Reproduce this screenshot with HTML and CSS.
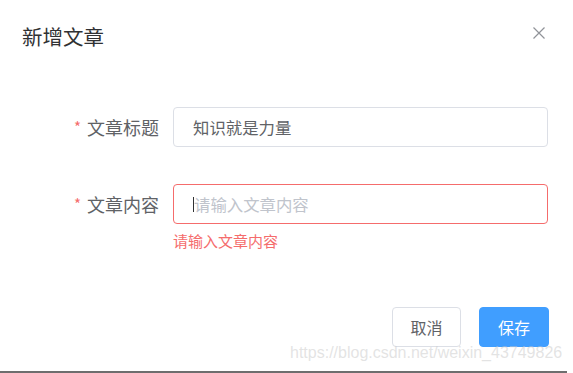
FILE: index.html
```html
<!DOCTYPE html>
<html lang="zh-CN">
<head>
<meta charset="utf-8">
<title>新增文章</title>
<link rel="stylesheet" href="styles.css">
</head>
<body>
<div class="dialog">
  <div class="dialog-header">
    <span class="dialog-title">新增文章</span>
    <button class="dialog-close" aria-label="Close">
      <svg width="12" height="12" viewBox="0 0 12 12"><path d="M0.5 0.5L11.5 11.5M11.5 0.5L0.5 11.5" stroke="#909399" stroke-width="1.2" fill="none"/></svg>
    </button>
  </div>
  <div class="dialog-body">
    <div class="form-item">
      <label class="form-label"><span class="req">*</span>文章标题</label>
      <div class="form-content">
        <div class="input">知识就是力量</div>
      </div>
    </div>
    <div class="form-item">
      <label class="form-label"><span class="req">*</span>文章内容</label>
      <div class="form-content">
        <div class="input is-error"><span class="caret"></span><span class="placeholder">请输入文章内容</span></div>
        <div class="form-error">请输入文章内容</div>
      </div>
    </div>
  </div>
  <div class="dialog-footer">
    <button class="btn btn-default">取消</button>
    <button class="btn btn-primary">保存</button>
  </div>
  <div class="watermark">https://blog.csdn.net/weixin_43749826</div>
</div>
<div class="bottom-line"></div>
</body>
</html>
```
FILE: styles.css
```css
* { box-sizing: border-box; }
html, body { margin: 0; padding: 0; background: #fff; }
body {
  width: 573px;
  height: 373px;
  overflow: hidden;
  font-family: "Noto Sans CJK SC", "Noto Sans", sans-serif;
}
.dialog {
  position: relative;
  height: 371px;
}
.dialog-header {
  display: flex;
  justify-content: space-between;
  align-items: flex-start;
  padding: 23px 28px 0 22px;
}
.dialog-title {
  font-size: 20.5px;
  line-height: 26px;
  color: #303133;
}
.dialog-close {
  border: 0;
  background: none;
  padding: 0;
  margin-top: 4px;
  width: 12px;
  height: 12px;
  display: flex;
  cursor: pointer;
}
.dialog-body {
  padding: 58px 25px 0 0;
}
.form-item {
  display: grid;
  grid-template-columns: 173px 1fr;
  margin-bottom: 37px;
}
.form-item:last-child { margin-bottom: 0; }
.form-label {
  height: 40px;
  display: flex;
  align-items: center;
  justify-content: flex-end;
  padding-right: 14px;
  font-size: 18px;
  color: #606266;
}
.req {
  color: #f56c6c;
  font-size: 15px;
  margin-right: 6px;
  position: relative;
  top: -1px;
}
.input {
  height: 40px;
  border: 1px solid #dcdfe6;
  border-radius: 4px;
  padding: 0 19px;
  display: flex;
  align-items: center;
  font-size: 16.4px;
  color: #606266;
}
.input.is-error { border-color: #f56c6c; }
.caret {
  width: 1px;
  height: 15px;
  background: #303133;
}
.placeholder { color: #c0c4cc; }
.form-error {
  font-size: 15px;
  line-height: 18px;
  padding-top: 8px;
  color: #f56c6c;
}
.dialog-footer {
  display: flex;
  justify-content: flex-end;
  gap: 18px;
  padding: 57px 24px 0 0;
}
.btn {
  height: 40px;
  width: 70px;
  border-radius: 4px;
  font-family: inherit;
  font-size: 16px;
  padding: 0;
  cursor: pointer;
}
.btn-default {
  width: 69px;
  background: #fff;
  border: 1px solid #dcdfe6;
  color: #606266;
}
.btn-primary {
  background: #409eff;
  border: 1px solid #409eff;
  color: #fff;
}
.watermark {
  position: absolute;
  left: 290px;
  top: 345px;
  font-family: "Liberation Sans", Arial, sans-serif;
  font-size: 16px;
  line-height: 16px;
  color: rgba(200, 200, 200, 0.5);
  white-space: nowrap;
  pointer-events: none;
}
.bottom-line {
  width: 567px;
  height: 2px;
  background: #6e6e6e;
}
```
